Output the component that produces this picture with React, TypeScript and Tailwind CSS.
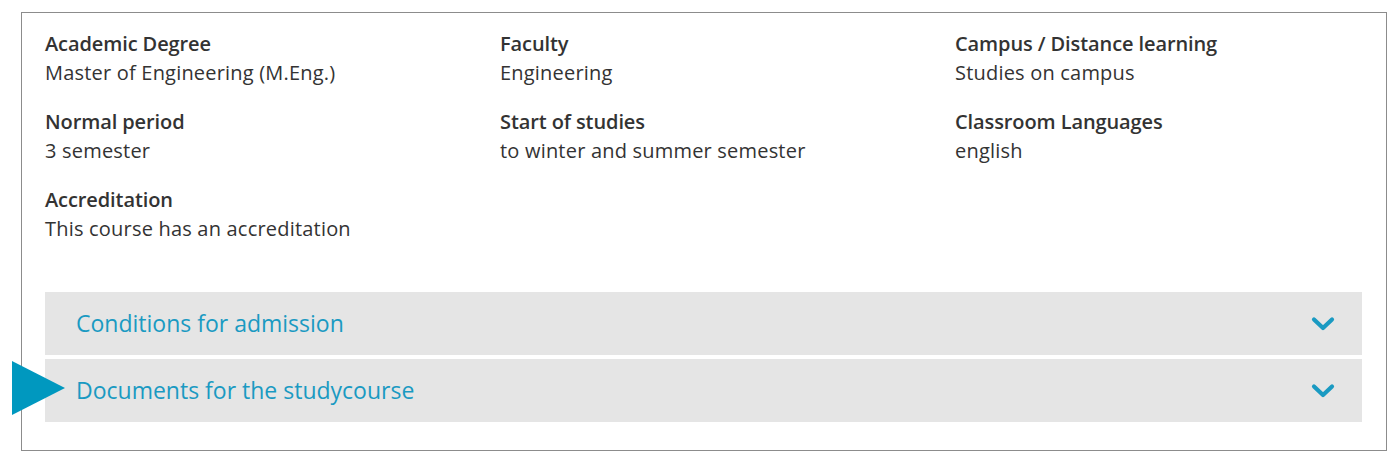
import React from "react";

const items = [
  ["Academic Degree", "Master of Engineering (M.Eng.)"],
  ["Faculty", "Engineering"],
  ["Campus / Distance learning", "Studies on campus"],
  ["Normal period", "3 semester"],
  ["Start of studies", "to winter and summer semester"],
  ["Classroom Languages", "english"],
  ["Accreditation", "This course has an accreditation"],
];

function Chevron() {
  return (
    <svg width="24" height="16" viewBox="0 0 24 16" className="shrink-0">
      <path d="M3 3.5 L12 12 L21 3.5" fill="none" stroke="#1a9ac2" strokeWidth="4.2" strokeLinecap="round" strokeLinejoin="round" />
    </svg>
  );
}

export default function App() {
  return (
    <div className="w-[1400px] h-[463px] bg-white pt-3 pl-[21px]" style={{ fontFamily: '"Open Sans", sans-serif' }}>
      <div className="relative w-[1366px] h-[439px] border border-[#8c8c8c] pl-[23px] pr-6 pt-[16px]">
        <div className="grid grid-cols-[455px_455px_1fr] gap-y-[20px]">
          {items.map(([label, value]) => (
            <div key={label} className="flex flex-col">
              <div className="text-[20px] leading-[29px] font-semibold text-[#333] tracking-[-0.1px]">{label}</div>
              <div className="text-[20px] leading-[29px] text-[#333] tracking-[0.2px]">{value}</div>
            </div>
          ))}
        </div>
        <div className="mt-[49px] flex flex-col gap-[4px]">
          {["Conditions for admission", "Documents for the studycourse"].map((t) => (
            <div key={t} className="h-[63px] bg-[#e5e5e5] flex items-center justify-between pl-[31px] pr-[27px]">
              <span className="text-[23px] text-[#1a9ac2]">{t}</span>
              <Chevron />
            </div>
          ))}
        </div>
        <svg className="absolute left-[-10px] top-[348px]" width="53" height="54" viewBox="0 0 53 54">
          <polygon points="0,0 53,27 0,54" fill="#0098bf" />
        </svg>
      </div>
    </div>
  );
}
